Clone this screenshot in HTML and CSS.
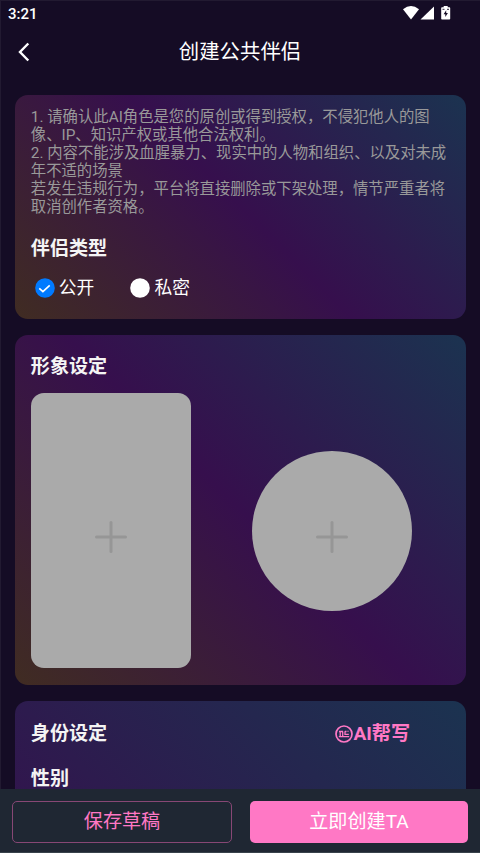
FILE: index.html
```html
<!DOCTYPE html>
<html lang="zh-CN">
<head>
<meta charset="utf-8">
<meta name="viewport" content="width=device-width, initial-scale=1">
<title>创建公共伴侣</title>
<link rel="stylesheet" href="styles.css">
</head>
<body>
<div class="app">
  <div class="status">
    <span class="clock">3:21</span>
    <svg class="status-icons" width="48" height="16" viewBox="0 0 48 16" fill="#fff">
      <path d="M0 3.200Q8-3 16 3.200L8 13.500Z"/>
      <path d="M31 .5V13.500H17.500Z"/>
      <path d="M39 1.200h1.700V0h4v1.200h1.700q.8 0 .8.8V12.700q0 .8-.8.8H39q-.8 0-.8-.8V2q0-.8.800-.8Z"/>
      <path d="M43.200 4.300l-2.600 4h1.700V11l2.600-4h-1.700Z" fill="#150c25"/>
      <path d="M39.500 3.300h2M44 3.300h2" stroke="#150c25" stroke-width=".9"/>
    </svg>
  </div>
  <header class="nav">
    <svg class="back" width="12" height="20" viewBox="0 0 12 20" fill="none" stroke="#fff" stroke-width="2.400"><path d="M10.300 1.500L2 10l8.300 8.500"/></svg>
    <h1 class="title">创建公共伴侣</h1>
  </header>
  <main class="content">
    <section class="card card-type">
      <p class="notice">1. 请确认此AI角色是您的原创或得到授权，不侵犯他人的图<br>像、IP、知识产权或其他合法权利。<br>2. 内容不能涉及血腥暴力、现实中的人物和组织、以及对未成<br>年不适的场景<br>若发生违规行为，平台将直接删除或下架处理，情节严重者将<br>取消创作者资格。</p>
      <h2 class="heading">伴侣类型</h2>
      <div class="radios">
        <div class="radio">
          <svg class="dot" width="20" height="20" viewBox="0 0 20 20"><circle cx="10" cy="10" r="9.800" fill="#007aff"/><path d="M4.300 10.300l3.600 3.300 6.800-6.300" fill="none" stroke="#fff" stroke-width="1.600"/></svg>
          <span>公开</span>
        </div>
        <div class="radio">
          <svg class="dot" width="20" height="20" viewBox="0 0 20 20"><circle cx="10" cy="10" r="9.800" fill="#fff"/></svg>
          <span>私密</span>
        </div>
      </div>
    </section>
    <section class="card card-image">
      <h2 class="heading">形象设定</h2>
      <div class="uploads">
        <div class="upload portrait">
          <svg width="32" height="32" viewBox="0 0 32 32" stroke="#969696" stroke-width="3" stroke-linecap="round"><path d="M1.500 16h29M16 1.500v29"/></svg>
        </div>
        <div class="upload avatar">
          <svg width="32" height="32" viewBox="0 0 32 32" stroke="#969696" stroke-width="3" stroke-linecap="round"><path d="M1.500 16h29M16 1.500v29"/></svg>
        </div>
      </div>
    </section>
    <section class="card card-identity">
      <div class="row">
        <h2 class="heading">身份设定</h2>
        <div class="ai">
          <svg width="18" height="18" viewBox="0 0 18 18" fill="none" stroke="#ff78c5"><circle cx="9" cy="9" r="8" stroke-width="1.700"/><path d="M4 6.500h4M5.200 6.500v5M7.700 6.500v5M3.800 11.700h10.400M10 6.300v3h3.800M10 6.500h1.500M13 5.800v1" stroke-width="1.300"/></svg>
          <span>AI帮写</span>
        </div>
      </div>
      <h2 class="heading gender">性别</h2>
    </section>
  </main>
  <footer class="actions">
    <button class="btn save">保存草稿</button>
    <button class="btn create">立即创建TA</button>
  </footer>
</div>
</body>
</html>
```
FILE: styles.css
```css
* { box-sizing: border-box; }
html, body { margin: 0; height: 853px; overflow: hidden; }
body {
  background: #150c25;
  color: #fff;
  font-family: Roboto, "Noto Sans CJK SC", sans-serif;
}
.app {
  display: flex;
  flex-direction: column;
  width: 480px;
  height: 853px;
  overflow: hidden;
  box-shadow: inset 1px 1px #221a31;
}
.status {
  display: flex;
  flex: none;
  justify-content: space-between;
  height: 28px;
  padding: 5px 29px 0 8px;
}
.clock { font-size: 15px; line-height: 18px; font-weight: 500; }
.status-icons { display: block; margin-top: 1px; }
.nav {
  display: grid;
  flex: none;
  grid-template-columns: 28px 1fr 28px;
  align-items: center;
  height: 66.500px;
  padding: 0 0 18.500px;
}
.back { margin-left: 18px; }
.title {
  margin: 0;
  font-size: 20.400px;
  line-height: 28px;
  font-weight: 400;
  text-align: center;
}
.content {
  display: flex;
  flex: 1;
  flex-direction: column;
  gap: 16px;
  min-height: 0;
  padding: 0 14.500px 0 15.300px;
  overflow: hidden;
}
.card {
  flex: none;
  padding: 0 15.500px;
  border-radius: 13px;
  background: linear-gradient(45deg, #402c22, #360f4d 50%, #1b3350);
}
.card-type { height: 224px; padding-top: 13.500px; }
.card-image { height: 350.500px; padding-top: 18px; }
.card-identity { height: 900px; padding-top: 18.500px; }
.notice {
  margin: 0;
  color: #999;
  font-size: 15.350px;
  line-height: 18.100px;
  white-space: nowrap;
}
.heading {
  margin: 0;
  color: #f4f4f4;
  font-size: 19.100px;
  line-height: 28px;
  font-weight: 700;
}
.card-type .heading { margin-top: 18px; }
.radios {
  display: flex;
  gap: 36px;
  margin: 11px 0 0 4px;
}
.radio {
  display: flex;
  gap: 4px;
  font-size: 17.800px;
  line-height: 27px;
}
.dot { margin-top: 4px; }
.uploads {
  display: flex;
  align-items: center;
  gap: 61px;
  margin-top: 12.500px;
}
.upload {
  display: flex;
  align-items: center;
  justify-content: center;
  width: 160px;
  background: #aaa;
}
.portrait { height: 275px; padding-top: 12px; border-radius: 13px; }
.avatar { height: 160px; padding-top: 12px; border-radius: 50%; }
.row {
  display: flex;
  justify-content: space-between;
  padding-right: 40px;
}
.ai {
  display: flex;
  align-items: center;
  color: #ff78c5;
  font-size: 19.100px;
  line-height: 28px;
  font-weight: 700;
}
.gender { margin-top: 17.500px; }
.actions {
  display: flex;
  flex: none;
  gap: 18px;
  height: 64px;
  padding: 12px 12px 10px;
  background: #1f2733;
  border-bottom: 1px solid #38424b;
}
.btn {
  flex: 1;
  height: 42px;
  padding: 0 0 1px;
  border: 0;
  border-radius: 5px;
  font-family: inherit;
  font-size: 19.100px;
  line-height: 28px;
}
.save { border: 1px solid #874775; background: transparent; color: #ff78c5; }
.create { background: #ff78c5; color: #fff; }
```
